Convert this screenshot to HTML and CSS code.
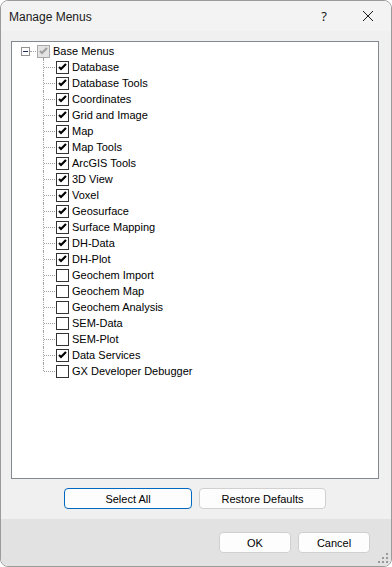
FILE: index.html
```html
<!DOCTYPE html>
<html lang="en">
<head>
  <meta charset="UTF-8">
  <meta name="viewport" content="width=device-width, initial-scale=1.0">
  <title>Manage Menus</title>
  <link rel="stylesheet" href="styles.css">
</head>
<body>
  <svg class="defs" width="0" height="0">
    <symbol id="chk" viewBox="0 0 11 11">
      <path d="M2 5 L4 7 L9 2" fill="none" stroke="currentColor" stroke-width="2.2"/>
    </symbol>
  </svg>

  <div class="window">
    <div class="titlebar">
      <span class="title">Manage Menus</span>
      <span class="help">?</span>
      <svg class="close" width="12" height="12" viewBox="0 0 12 12">
        <path d="M1 1 L11 11 M11 1 L1 11" stroke="#1a1a1a" stroke-width="1"/>
      </svg>
    </div>

    <div class="content">
      <div class="tree">
        <div class="root">
          <span class="expander"></span>
          <span class="cb disabled"><svg><use href="#chk"/></svg></span>
          <span class="label">Base Menus</span>
        </div>
        <ul class="children">
          <li><span class="cb"><svg><use href="#chk"/></svg></span>Database</li>
          <li><span class="cb"><svg><use href="#chk"/></svg></span>Database Tools</li>
          <li><span class="cb"><svg><use href="#chk"/></svg></span>Coordinates</li>
          <li><span class="cb"><svg><use href="#chk"/></svg></span>Grid and Image</li>
          <li><span class="cb"><svg><use href="#chk"/></svg></span>Map</li>
          <li><span class="cb"><svg><use href="#chk"/></svg></span>Map Tools</li>
          <li><span class="cb"><svg><use href="#chk"/></svg></span>ArcGIS Tools</li>
          <li><span class="cb"><svg><use href="#chk"/></svg></span>3D View</li>
          <li><span class="cb"><svg><use href="#chk"/></svg></span>Voxel</li>
          <li><span class="cb"><svg><use href="#chk"/></svg></span>Geosurface</li>
          <li><span class="cb"><svg><use href="#chk"/></svg></span>Surface Mapping</li>
          <li><span class="cb"><svg><use href="#chk"/></svg></span>DH-Data</li>
          <li><span class="cb"><svg><use href="#chk"/></svg></span>DH-Plot</li>
          <li><span class="cb empty"></span>Geochem Import</li>
          <li><span class="cb empty"></span>Geochem Map</li>
          <li><span class="cb empty"></span>Geochem Analysis</li>
          <li><span class="cb empty"></span>SEM-Data</li>
          <li><span class="cb empty"></span>SEM-Plot</li>
          <li><span class="cb"><svg><use href="#chk"/></svg></span>Data Services</li>
          <li><span class="cb empty"></span>GX Developer Debugger</li>
        </ul>
      </div>

      <div class="actions">
        <button class="btn wide focused">Select All</button>
        <button class="btn wide">Restore Defaults</button>
      </div>
    </div>

    <div class="footer">
      <button class="btn small">OK</button>
      <button class="btn small">Cancel</button>
    </div>

    <svg class="grip" width="11" height="11" viewBox="0 0 11 11">
      <rect x="8" y="0" width="2" height="2" fill="#9a9a9a"/>
      <rect x="4" y="4" width="2" height="2" fill="#9a9a9a"/>
      <rect x="8" y="4" width="2" height="2" fill="#9a9a9a"/>
      <rect x="0" y="8" width="2" height="2" fill="#9a9a9a"/>
      <rect x="4" y="8" width="2" height="2" fill="#9a9a9a"/>
      <rect x="8" y="8" width="2" height="2" fill="#9a9a9a"/>
    </svg>
  </div>
</body>
</html>
```

FILE: styles.css
```css
* {
  box-sizing: border-box;
}
body {
  margin: 0;
  font-family: "Liberation Sans", Arial, sans-serif;
  font-size: 11px;
  color: #000;
  background: #fff;
}
.defs {
  position: absolute;
}
.window {
  position: relative;
  width: 392px;
  height: 567px;
  border: 1px solid #9b9b9b;
  border-radius: 8px;
  overflow: hidden;
  background: #f0f0f0;
  display: flex;
  flex-direction: column;
}
.titlebar {
  height: 30px;
  background: #f3f3f3;
  display: flex;
  align-items: center;
  padding-left: 8px;
}
.title {
  font-size: 12px;
  color: #1a1a1a;
  flex: 1;
  margin-top: 1px;
}
.help {
  font-family: "Noto Sans", sans-serif;
  font-size: 13px;
  color: #1a1a1a;
  margin-right: 35px;
}
.close {
  margin-right: 17px;
}
.content {
  padding: 10px 12px 0 10px;
  flex: 1;
}
.tree {
  height: 438px;
  border: 1px solid #828790;
  background: #fff;
  padding: 1px 0 0 9px;
}
.root {
  position: relative;
  height: 16px;
  display: flex;
  align-items: center;
}
.root::after {
  content: "";
  position: absolute;
  left: 22px;
  top: 14px;
  height: 2px;
  border-left: 1px dotted #a0a0a0;
}
.expander {
  position: relative;
  width: 9px;
  height: 9px;
  border: 1px solid #919191;
  background: #fff;
  margin-right: 7px;
}
.expander::before {
  content: "";
  position: absolute;
  left: 1px;
  top: 3px;
  width: 5px;
  height: 1px;
  background: #1c2d5a;
}
.expander::after {
  content: "";
  position: absolute;
  left: 8px;
  top: 3px;
  width: 6px;
  border-top: 1px dotted #a0a0a0;
}
.cb {
  width: 13px;
  height: 13px;
  border: 1px solid #333;
  background: #fff;
  color: #000;
  display: flex;
  align-items: center;
  justify-content: center;
  margin-right: 3px;
  flex: none;
}
.cb svg {
  width: 11px;
  height: 11px;
}
.cb.disabled {
  border-color: #a8a8a8;
  background: #e3e3e3;
  color: #a0a0a0;
}
.children {
  list-style: none;
  margin: 0;
  padding: 0;
}
.children li {
  position: relative;
  height: 16px;
  padding-left: 35px;
  display: flex;
  align-items: center;
}
.children li::before {
  content: "";
  position: absolute;
  left: 22px;
  top: 0;
  bottom: 0;
  border-left: 1px dotted #a0a0a0;
}
.children li:last-child::before {
  bottom: 8px;
}
.children li::after {
  content: "";
  position: absolute;
  left: 23px;
  top: 8px;
  width: 11px;
  border-top: 1px dotted #a0a0a0;
}
.actions {
  display: flex;
  justify-content: center;
  gap: 7px;
  margin-top: 9px;
}
.btn {
  height: 21px;
  font-family: "Liberation Sans", Arial, sans-serif;
  font-size: 11px;
  color: #000;
  background: #fdfdfd;
  border: 1px solid #d0d0d0;
  border-radius: 4px;
  padding: 0;
}
.btn.wide {
  width: 127px;
}
.btn.focused {
  width: 128px;
  border-color: #0067c0;
}
.btn.small {
  width: 72px;
}
.footer {
  height: 47px;
  background: #e2e2e2;
  display: flex;
  justify-content: flex-end;
  gap: 7px;
  padding: 13px 21px 0 0;
}
.grip {
  position: absolute;
  right: 2px;
  bottom: 2px;
}
```
